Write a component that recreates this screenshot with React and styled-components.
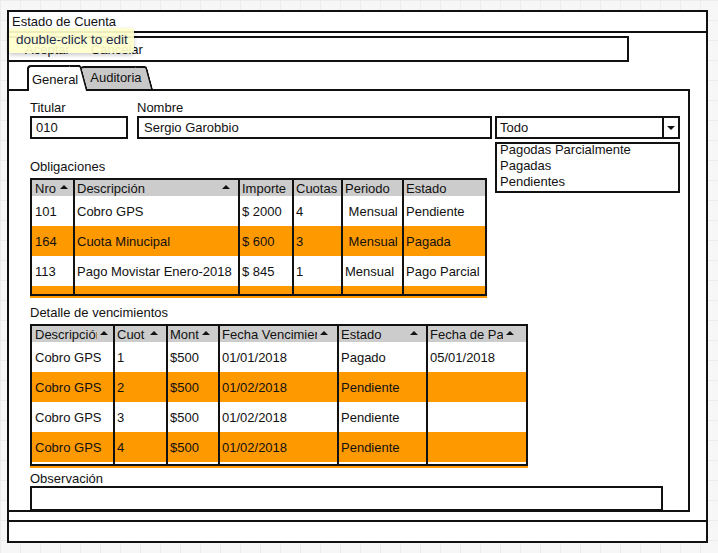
import styled, { createGlobalStyle } from 'styled-components';

const INK = '#111';
const ORANGE = '#ff9900';
const HEAD = '#cccccc';

const GlobalStyle = createGlobalStyle`
  * { box-sizing: border-box; }
  html, body { margin: 0; height: 100%; }
  body {
    font-family: 'Liberation Sans', Arial, sans-serif;
    font-size: 13px;
    color: ${INK};
    background-color: #f7f7f7;
    background-image:
      linear-gradient(#ececec 1px, transparent 1px),
      linear-gradient(90deg, #ececec 1px, transparent 1px);
    background-size: 20px 20px;
  }
`;

const Page = styled.div`
  padding: 10px 0 0 7px;
`;

const Window = styled.div`
  position: relative;
  width: 701px;
  height: 512px;
  border: 2px solid ${INK};
  background: #fff;
  display: flex;
  flex-direction: column;
  align-items: flex-start;
`;

const TitleBar = styled.div`
  align-self: stretch;
  height: 21px;
  padding: 2px 0 0 3px;
  line-height: 15px;
  border-bottom: 2px solid ${INK};
`;

const ButtonBar = styled.div`
  width: 622px;
  height: 26px;
  margin: 3px 0 0 -2px;
  padding-left: 16px;
  border: 2px solid ${INK};
  display: flex;
  align-items: center;
  gap: 21px;
`;

const Tooltip = styled.div`
  position: absolute;
  left: 0;
  top: 16px;
  width: 125px;
  height: 25px;
  padding-left: 7px;
  line-height: 24px;
  font-size: 13.5px;
  color: #1d2b4f;
  background: rgba(255, 255, 204, 0.92);
  border-radius: 3px;
  box-shadow: 0 2px 4px rgba(0, 0, 0, 0.22);
`;

const TabStrip = styled.div`
  position: relative;
  z-index: 1;
  height: 24px;
  margin-top: 3px;
  padding-left: 18px;
  display: flex;
  align-items: flex-end;
`;

const Tab = styled.div`
  position: relative;
  z-index: ${p => (p.$active ? 2 : 1)};
  height: ${p => (p.$active ? 26 : 23)}px;
  margin-bottom: ${p => (p.$active ? -2 : 0)}px;
  padding: ${p => (p.$active ? '5px 2px 0 3px' : '2px 3px 0 10px')};
  line-height: 15px;
  background: ${p => (p.$active ? '#fff' : '#c8c8c8')};
  border-top: 2px solid ${INK};
  border-left: ${p => (p.$active ? `2px solid ${INK}` : 'none')};
  border-top-left-radius: 4px;

  &::after {
    content: '';
    position: absolute;
    z-index: -1;
    top: -2px;
    bottom: 0;
    right: -8px;
    width: 10px;
    background: inherit;
    border-top: 2px solid ${INK};
    border-right: 2px solid ${INK};
    border-top-right-radius: 3px;
    transform: skewX(15deg);
    transform-origin: bottom;
  }
`;

const Panel = styled.div`
  position: relative;
  width: 683px;
  height: 423px;
  margin-left: -2px;
  padding: 9px 0 0 21px;
  border: 2px solid ${INK};
`;

const FieldRow = styled.div`
  display: flex;
  align-items: flex-end;
`;

const Field = styled.div`
  display: flex;
  flex-direction: column;
  width: ${p => p.$w}px;
  margin-left: ${p => p.$ml || 0}px;
`;

const Label = styled.div`
  height: 15px;
  line-height: 15px;
  margin-top: ${p => p.$mt || 0}px;
`;

const TextBox = styled.div`
  height: 23px;
  margin-top: 1px;
  padding-left: ${p => p.$pl || 4}px;
  line-height: 19px;
  border: 2px solid ${INK};
  background: #fff;
`;

const SelectBox = styled.div`
  position: relative;
  width: 185px;
  height: 23px;
  margin-left: 3px;
  border: 2px solid ${INK};
  display: flex;
`;

const SelectValue = styled.div`
  flex: 1;
  padding-left: 3px;
  line-height: 19px;
`;

const SelectButton = styled.div`
  width: 16px;
  border-left: 2px solid ${INK};
  display: flex;
  align-items: center;
  justify-content: center;
`;

const Triangle = styled.span`
  width: 0;
  height: 0;
  border-left: 4px solid transparent;
  border-right: 4px solid transparent;
  ${p => (p.$up ? 'border-bottom' : 'border-top')}: 4px solid ${INK};
`;

const DropList = styled.div`
  position: absolute;
  left: -2px;
  right: -2px;
  top: calc(100% + 5px);
  height: 51px;
  padding-left: 3px;
  border: 2px solid ${INK};
  background: #fff;
`;

const DropItem = styled.div`
  line-height: 16px;
  &:first-child { margin-top: -2px; }
`;

const Grid = styled.div`
  width: ${p => p.$w}px;
  margin-top: ${p => p.$mt}px;
  border: 2px solid ${INK};
  background: #fff;
  box-shadow: 0 2px 0 ${ORANGE};
`;

const Row = styled.div`
  display: grid;
  grid-template-columns: ${p => p.$cols};
  height: ${p => p.$h}px;
  background: ${p => p.$bg || '#fff'};
`;

const Cell = styled.div`
  padding-left: 2px;
  display: flex;
  align-items: center;
  white-space: nowrap;
  overflow: hidden;
  & + & { border-left: 2px solid ${INK}; }
  &:first-child { padding-left: 3px; }
`;

const HeadLabel = styled.span`
  flex: 1;
  min-width: 0;
  overflow: hidden;
  white-space: nowrap;
`;

const SortArrow = styled(Triangle)`
  flex: none;
  margin: 0 ${p => p.$mr}px 2px 3px;
`;

const ObsBox = styled.div`
  width: 633px;
  height: 25px;
  border: 2px solid ${INK};
`;

const StatusBar = styled.div`
  width: 701px;
  height: 23px;
  margin-top: -2px;
  border: 2px solid ${INK};
  background: #fff;
`;

const obligCols = '41px 165px 54px 49px 61px 83px';
const obligHead = [
  { label: 'Nro', sort: 5 },
  { label: 'Descripción', sort: 8 },
  { label: 'Importe' },
  { label: 'Cuotas' },
  { label: 'Periodo' },
  { label: 'Estado' },
];
const obligRows = [
  ['101', 'Cobro GPS', '$ 2000', '4', '\u00a0Mensual', 'Pendiente'],
  ['164', 'Cuota Minucipal', '$ 600', '3', '\u00a0Mensual', 'Pagada'],
  ['113', 'Pago Movistar Enero-2018', '$ 845', '1', 'Mensual', 'Pago Parcial'],
];

const vencCols = '81px 53px 52px 119px 89px 100px';
const vencHead = [
  { label: 'Descripción', sort: 5 },
  { label: 'Cuot', sort: 8 },
  { label: 'Mont', sort: 8 },
  { label: 'Fecha Vencimiento', sort: 9 },
  { label: 'Estado', sort: 8 },
  { label: 'Fecha de Pago', sort: 12 },
];
const vencRows = [
  ['Cobro GPS', '1', '$500', '01/01/2018', 'Pagado', '05/01/2018'],
  ['Cobro GPS', '2', '$500', '01/02/2018', 'Pendiente', ''],
  ['Cobro GPS', '3', '$500', '01/02/2018', 'Pendiente', ''],
  ['Cobro GPS', '4', '$500', '01/02/2018', 'Pendiente', ''],
];

function DataGrid({ cols, head, rows, width, mt, tail, tailBg }) {
  return (
    <Grid $w={width} $mt={mt}>
      <Row $cols={cols} $h={16} $bg={HEAD}>
        {head.map(h => (
          <Cell key={h.label}>
            <HeadLabel>{h.label}</HeadLabel>
            {h.sort && <SortArrow $up $mr={h.sort} />}
          </Cell>
        ))}
      </Row>
      {rows.map((r, i) => (
        <Row key={i} $cols={cols} $h={30} $bg={i % 2 ? ORANGE : '#fff'}>
          {r.map((c, j) => (
            <Cell key={j}>{c}</Cell>
          ))}
        </Row>
      ))}
      <Row $cols={cols} $h={tail} $bg={tailBg}>
        {head.map(h => (
          <Cell key={h.label} />
        ))}
      </Row>
    </Grid>
  );
}

export default function App() {
  return (
    <Page>
      <GlobalStyle />
      <Window>
        <TitleBar>Estado de Cuenta</TitleBar>
        <ButtonBar>
          <span>Aceptar</span>
          <span>Cancelar</span>
        </ButtonBar>
        <Tooltip>double-click to edit</Tooltip>
        <TabStrip>
          <Tab $active>General</Tab>
          <Tab>Auditoria</Tab>
        </TabStrip>
        <Panel>
          <FieldRow>
            <Field $w={98}>
              <Label>Titular</Label>
              <TextBox $pl={4}>010</TextBox>
            </Field>
            <Field $w={355} $ml={9}>
              <Label>Nombre</Label>
              <TextBox $pl={5}>Sergio Garobbio</TextBox>
            </Field>
            <SelectBox>
              <SelectValue>Todo</SelectValue>
              <SelectButton>
                <Triangle />
              </SelectButton>
              <DropList>
                <DropItem>Pagodas Parcialmente</DropItem>
                <DropItem>Pagadas</DropItem>
                <DropItem>Pendientes</DropItem>
              </DropList>
            </SelectBox>
          </FieldRow>

          <Label $mt={20}>Obligaciones</Label>
          <DataGrid
            cols={obligCols}
            head={obligHead}
            rows={obligRows}
            width={457}
            mt={4}
            tail={8}
            tailBg={ORANGE}
          />

          <Label $mt={9}>Detalle de vencimientos</Label>
          <DataGrid
            cols={vencCols}
            head={vencHead}
            rows={vencRows}
            width={498}
            mt={4}
            tail={2}
            tailBg="#fff"
          />

          <Label $mt={5}>Observación</Label>
          <ObsBox />
        </Panel>
      </Window>
      <StatusBar />
    </Page>
  );
}
